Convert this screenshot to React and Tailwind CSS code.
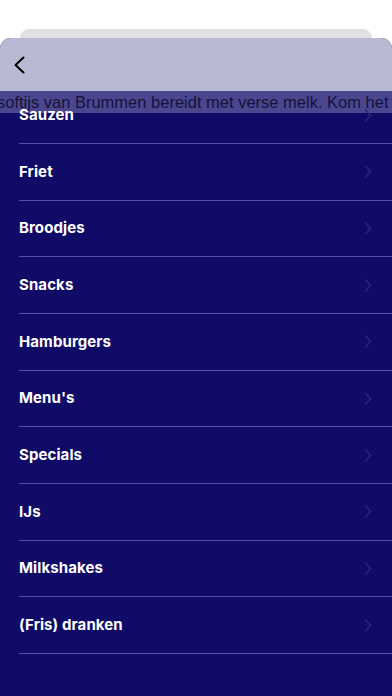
import React from "react";

const items = ["Sauzen","Friet","Broodjes","Snacks","Hamburgers","Menu's","Specials","IJs","Milkshakes","(Fris) dranken"];

function Chevron() {
  return (
    <svg width="8" height="13" viewBox="0 0 8 13" fill="none">
      <path d="M1.5 1 L6.5 6.5 L1.5 12" stroke="#2a2674" strokeWidth="1.6" strokeLinecap="round" strokeLinejoin="round" />
    </svg>
  );
}

export default function App() {
  return (
    <div className="w-[392px] h-[696px] bg-white overflow-hidden flex flex-col" style={{ fontFamily: "Inter, 'Noto Sans', sans-serif" }}>
      <div className="pt-[29px] px-[20px]">
        <div className="h-[20px] bg-[#e0e0e0] rounded-t-[9px]"></div>
      </div>
      <div className="-mt-[11px] flex-1 bg-[#0f0b66] rounded-t-[11px] overflow-hidden flex flex-col">
        <div className="h-[53px] bg-[#bab9d4] flex items-center pl-[13px]">
          <svg width="13" height="18" viewBox="0 0 13 18" fill="none">
            <path d="M10.5 1.5 L2.5 9 L10.5 16.5" stroke="#000" strokeWidth="2" strokeLinecap="round" strokeLinejoin="round" />
          </svg>
        </div>
        <div className="relative flex-1">
          <div className="absolute top-0 left-0 right-0 h-[22px] bg-[#4a4790] overflow-hidden whitespace-nowrap">
            <div className="-ml-[3px] text-[16.5px] leading-[22px] text-[#15123a]" style={{ fontFamily: "'Liberation Sans', Arial, sans-serif" }}>
              softijs van Brummen bereidt met verse melk. Kom het eens proeven!
            </div>
          </div>
          <div className="relative flex flex-col">
            {items.map((it, i) => (
              <div key={it} className={`${i === 0 ? "h-[53px] pb-[4px]" : "h-[56.67px]"} flex items-center ml-[19px] border-b border-[#5552a2] pr-[20px]`}>
                <span className="flex-1 text-white font-bold text-[15px] tracking-[0.1px]">{it}</span>
                <Chevron />
              </div>
            ))}
          </div>
        </div>
      </div>
    </div>
  );
}
